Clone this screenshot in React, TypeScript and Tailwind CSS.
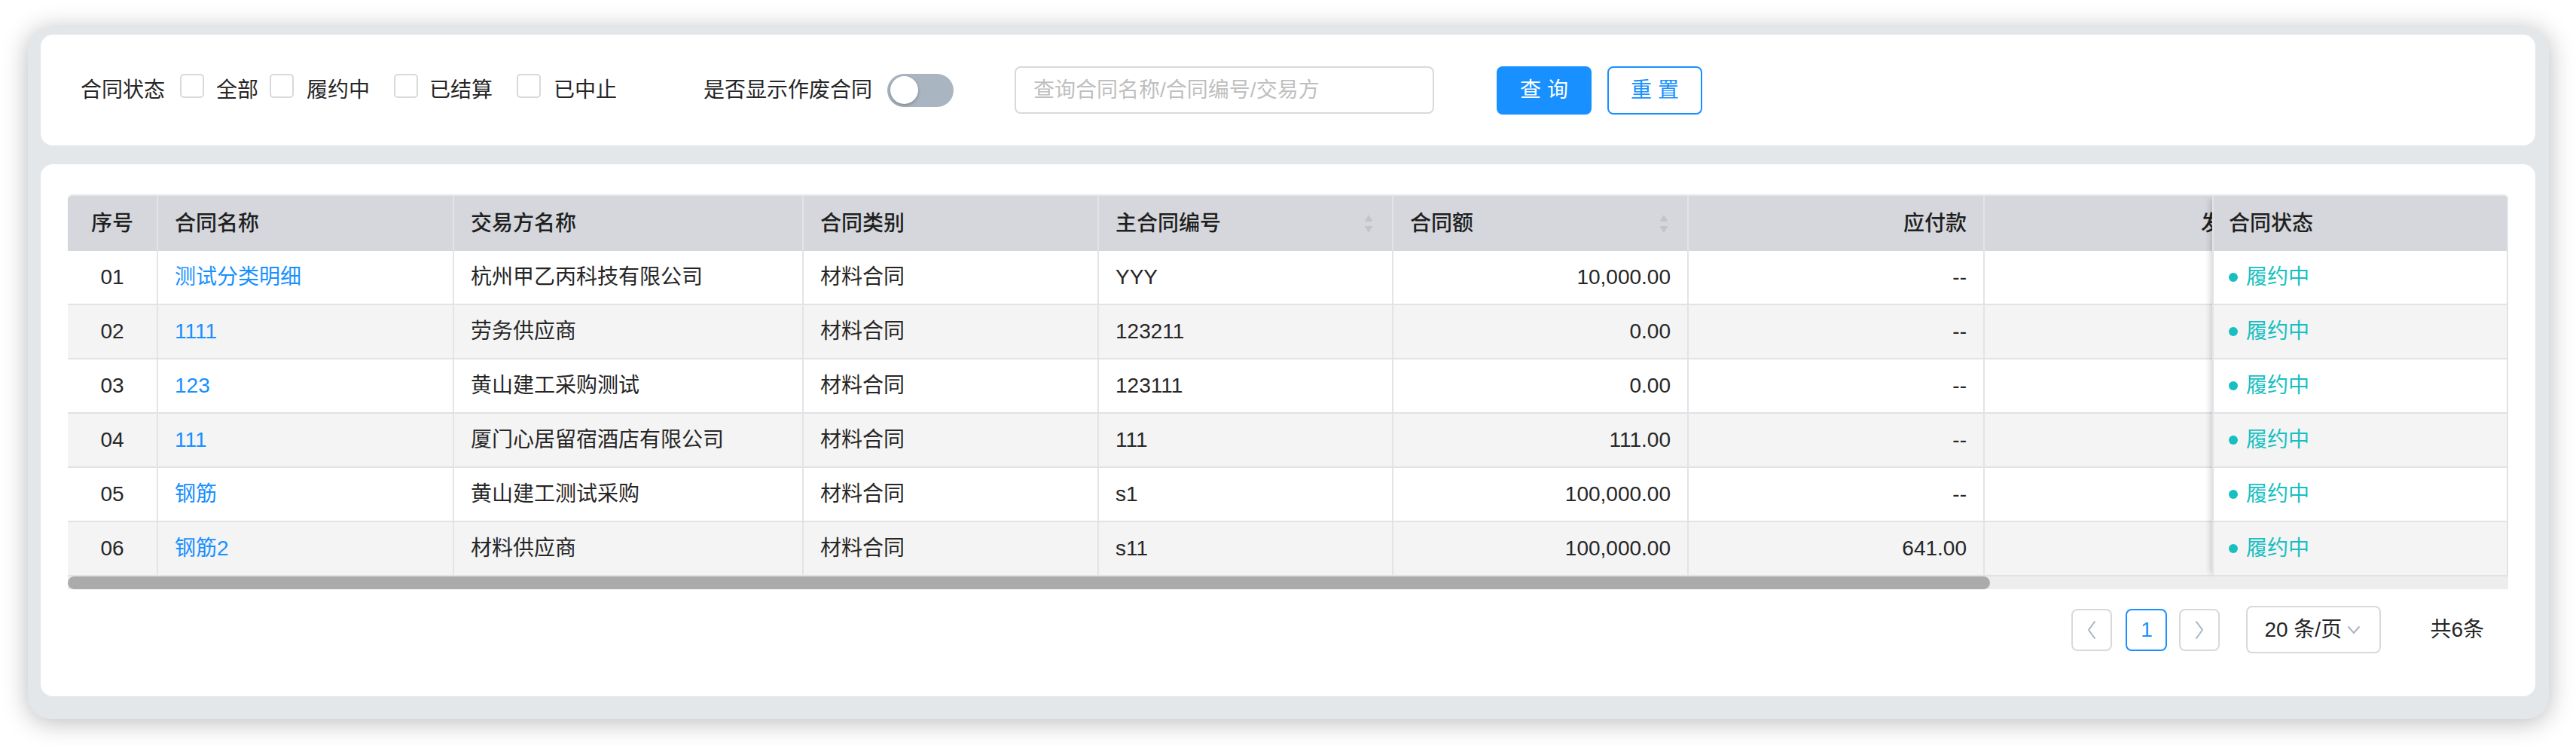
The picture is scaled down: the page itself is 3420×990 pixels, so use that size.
import React from "react";

const rows = [
  ["01", "测试分类明细", "杭州甲乙丙科技有限公司", "材料合同", "YYY", "10,000.00", "--"],
  ["02", "1111", "劳务供应商", "材料合同", "123211", "0.00", "--"],
  ["03", "123", "黄山建工采购测试", "材料合同", "123111", "0.00", "--"],
  ["04", "111", "厦门心居留宿酒店有限公司", "材料合同", "111", "111.00", "--"],
  ["05", "钢筋", "黄山建工测试采购", "材料合同", "s1", "100,000.00", "--"],
  ["06", "钢筋2", "材料供应商", "材料合同", "s11", "100,000.00", "641.00"],
];

function SortIcon() {
  return (
    <svg width="14" height="26" viewBox="0 0 14 26" className="shrink-0">
      <path d="M7 1 L12.5 10 L1.5 10 Z" fill="#c4c4c4" />
      <path d="M7 25 L12.5 16 L1.5 16 Z" fill="#c4c4c4" />
    </svg>
  );
}

function Checkbox() {
  return <span className="inline-block w-[32px] h-[32px] border-2 border-[#d9d9d9] rounded-[5px] bg-white shrink-0" />;
}

function Chevron({ dir }: { dir: "left" | "right" }) {
  return (
    <svg width="14" height="26" viewBox="0 0 14 26">
      <path
        d={dir === "left" ? "M11 2 L3 13 L11 24" : "M3 2 L11 13 L3 24"}
        fill="none"
        stroke="#a9b4bf"
        strokeWidth="2"
        strokeLinecap="round"
        strokeLinejoin="round"
      />
    </svg>
  );
}

const cell = "h-full flex items-center px-[22px] border-r-2 border-[#e3e3e8] shrink-0";

export default function App() {
  return (
    <div className="w-[3420px] h-[990px] bg-white pt-[36px] pl-[37px] font-['Liberation_Sans','Noto_Sans_CJK_SC',sans-serif] text-[28px] text-[#262626]">
      <div className="w-[3347px] h-[918px] rounded-[30px] bg-[#e3e7ea] shadow-[0_4px_34px_rgba(0,0,0,0.28)] pt-[10px] pl-[17px] pr-[18px] pb-[30px] flex flex-col gap-[25px]">
        {/* filter card */}
        <div className="h-[147px] shrink-0 bg-white rounded-[16px] flex items-center pl-[53px]">
          <span>合同状态</span>
          <span className="ml-[20px]"><Checkbox /></span>
          <span className="ml-[16px]">全部</span>
          <span className="ml-[15px]"><Checkbox /></span>
          <span className="ml-[17px]">履约中</span>
          <span className="ml-[32px]"><Checkbox /></span>
          <span className="ml-[15px]">已结算</span>
          <span className="ml-[32px]"><Checkbox /></span>
          <span className="ml-[17px]">已中止</span>
          <span className="ml-[115px]">是否显示作废合同</span>
          <span className="ml-[20px] w-[88px] h-[44px] rounded-full bg-[#a9b6c1] flex items-center px-[4px]">
            <span className="w-[37px] h-[37px] rounded-full bg-white shadow-[0_2px_4px_rgba(0,0,0,0.25)]" />
          </span>
          <div className="ml-[81px] w-[557px] h-[63px] border-2 border-[#d9d9d9] rounded-[8px] flex items-center pl-[23px] text-[#bfbfbf]">
            查询合同名称/合同编号/交易方
          </div>
          <button className="ml-[83px] w-[126px] h-[64px] rounded-[8px] bg-[#1890ff] text-white flex items-center justify-center tracking-[8px] pl-[8px]">
            查询
          </button>
          <button className="ml-[21px] w-[126px] h-[64px] rounded-[8px] border-2 border-[#1890ff] bg-white text-[#1890ff] flex items-center justify-center tracking-[8px] pl-[8px]">
            重置
          </button>
        </div>

        {/* table card */}
        <div className="flex-1 bg-white rounded-[16px] pt-[40px] px-[36px] flex flex-col">
          <div className="flex border-t-2 border-[#e6e6ea] rounded-t-[6px] overflow-hidden">
            {/* scrolling part */}
            <div className="w-[2847px] overflow-hidden shrink-0">
              <div className="w-max">
                <div className="h-[73px] flex bg-[#d5d7dc] font-medium text-[#1f1f1f]">
                  <div className={`${cell} w-[120px] justify-center`}>序号</div>
                  <div className={`${cell} w-[393px]`}>合同名称</div>
                  <div className={`${cell} w-[464px]`}>交易方名称</div>
                  <div className={`${cell} w-[392px]`}>合同类别</div>
                  <div className={`${cell} w-[391px] justify-between`}>
                    <span>主合同编号</span>
                    <span className="mr-[2px]"><SortIcon /></span>
                  </div>
                  <div className={`${cell} w-[392px] justify-between`}>
                    <span>合同额</span>
                    <span className="mr-[2px]"><SortIcon /></span>
                  </div>
                  <div className={`${cell} w-[393px] justify-end`}>应付款</div>
                  <div className={`${cell} w-[423px] justify-end`}>发票金额</div>
                </div>
                {rows.map((r, i) => (
                  <div
                    key={r[0]}
                    className={`h-[72px] flex border-b-2 border-[#e1e1e6] ${i % 2 === 1 ? "bg-[#f4f4f5]" : "bg-white"}`}
                  >
                    <div className={`${cell} w-[120px] justify-center`}>{r[0]}</div>
                    <div className={`${cell} w-[393px] text-[#1890ff]`}>{r[1]}</div>
                    <div className={`${cell} w-[464px]`}>{r[2]}</div>
                    <div className={`${cell} w-[392px]`}>{r[3]}</div>
                    <div className={`${cell} w-[391px]`}>{r[4]}</div>
                    <div className={`${cell} w-[392px] justify-end`}>{r[5]}</div>
                    <div className={`${cell} w-[393px] justify-end`}>{r[6]}</div>
                    <div className={`${cell} w-[423px] justify-end`} />
                  </div>
                ))}
              </div>
            </div>
            {/* fixed right column */}
            <div className="w-[393px] shrink-0 shadow-[-6px_0_8px_-4px_rgba(0,0,0,0.18)] border-l-2 border-[#e3e3e8] relative">
              <div className="h-[73px] flex items-center px-[20px] bg-[#d5d7dc] font-medium text-[#1f1f1f] border-r-2 border-[#e3e3e8]">
                合同状态
              </div>
              {rows.map((r, i) => (
                <div
                  key={r[0]}
                  className={`h-[72px] flex items-center px-[20px] border-b-2 border-r-2 border-[#e1e1e6] text-[#17bfc1] ${i % 2 === 1 ? "bg-[#f4f4f5]" : "bg-white"}`}
                >
                  <span className="w-[12px] h-[12px] rounded-full bg-[#17bfc1] mr-[11px]" />
                  履约中
                </div>
              ))}
            </div>
          </div>
          {/* scrollbar */}
          <div className="h-[17px] bg-[#ededed] flex">
            <div className="w-[2552px] h-full rounded-full bg-[#ababab]" />
          </div>

          {/* pagination */}
          <div className="mt-[22px] flex items-center justify-end pr-[32px]">
            <div className="w-[54px] h-[56px] border-2 border-[#d9d9d9] rounded-[8px] flex items-center justify-center">
              <Chevron dir="left" />
            </div>
            <div className="ml-[18px] w-[55px] h-[56px] border-2 border-[#1890ff] rounded-[8px] flex items-center justify-center text-[#1890ff]">
              1
            </div>
            <div className="ml-[16px] w-[54px] h-[56px] border-2 border-[#d9d9d9] rounded-[8px] flex items-center justify-center">
              <Chevron dir="right" />
            </div>
            <div className="ml-[35px] w-[179px] h-[63px] border-2 border-[#d9d9d9] rounded-[8px] flex items-center pl-[22px]">
              <span>20 条/页</span>
              <svg width="20" height="14" viewBox="0 0 20 14" className="ml-[6px]">
                <path d="M3 3 L10 11 L17 3" fill="none" stroke="#a9b4bf" strokeWidth="2" strokeLinecap="round" />
              </svg>
            </div>
            <span className="ml-[65px]">共6条</span>
          </div>
        </div>
      </div>
    </div>
  );
}
